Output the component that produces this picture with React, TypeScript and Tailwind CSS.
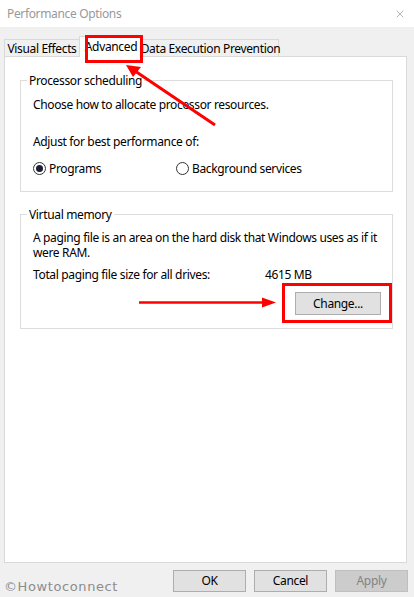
import { X } from "lucide-react";

const font = "font-['Noto_Sans',sans-serif] tracking-[-0.35px]";

function Radio({ checked, label }: { checked?: boolean; label: string }) {
  return (
    <div className="flex items-center gap-[3px]">
      <span className="w-[13px] h-[13px] rounded-full border border-[#333] bg-white flex items-center justify-center">
        {checked && <span className="w-[7px] h-[7px] rounded-full bg-[#1e1e32]" />}
      </span>
      <span>{label}</span>
    </div>
  );
}

function Group({ title, children, className }: { title: string; children: React.ReactNode; className?: string }) {
  return (
    <div className={`ml-[15px] w-[373px] border border-[#dcdcdc] pl-[12px] ${className ?? ""}`}>
      <div className="-mt-[8px] ml-[-6px] w-fit bg-white px-[2px] leading-[16px]">{title}</div>
      {children}
    </div>
  );
}

function Btn({ label, disabled, className }: { label: string; disabled?: boolean; className?: string }) {
  return (
    <div
      className={`h-[22px] flex items-center justify-center border ${
        disabled ? "bg-[#cccccc] border-[#bfbfbf] text-[#838383]" : "bg-[#e1e1e1] border-[#adadad] text-black"
      } ${className ?? ""}`}
    >
      {label}
    </div>
  );
}

export default function App() {
  return (
    <div className={`relative w-[414px] h-[597px] overflow-hidden bg-[#f0f0f0] text-[12px] text-black ${font}`}>
      {/* title bar */}
      <div className="h-[27px] bg-white flex items-center justify-between pl-[7px] pr-[8px]">
        <span className="text-[#999]">Performance Options</span>
        <X size={12} strokeWidth={1} className="text-[#666]" />
      </div>

      {/* tabs */}
      <div className="mt-[9px] ml-[4px] flex items-end h-[21px] whitespace-nowrap">
        <div className="w-[76px] h-[18px] border border-b-0 border-[#d9d9d9] flex items-center justify-center leading-none">
          Visual Effects
        </div>
        <div className="relative z-10 w-[64px] h-[21px] bg-white border border-b-0 border-[#d9d9d9] -ml-[1px] flex items-start justify-center pt-[2px] leading-[15px]">
          Advanced
        </div>
        <div className="w-[137px] h-[18px] border border-b-0 border-[#d9d9d9] -ml-[1px] flex items-center justify-center leading-none">
          Data Execution Prevention
        </div>
      </div>

      {/* panel */}
      <div className="-mt-[1px] ml-[4px] w-[403px] h-[507px] bg-white border border-[#d9d9d9] pt-[23px] leading-[15px]">
        <Group title="Processor scheduling" className="pb-[15px]">
          <div className="mt-[8px]">Choose how to allocate processor resources.</div>
          <div className="mt-[22px]">Adjust for best performance of:</div>
          <div className="mt-[12px] grid grid-cols-[143px_1fr]">
            <Radio checked label="Programs" />
            <Radio label="Background services" />
          </div>
        </Group>

        <Group title="Virtual memory" className="mt-[22px] pb-[13px]">
          <p className="mt-[7px] w-[352px]">
            A paging file is an area on the hard disk that Windows uses as if it were RAM.
          </p>
          <div className="mt-[7px] grid grid-cols-[232px_1fr]">
            <span>Total paging file size for all drives:</span>
            <span>4615 MB</span>
          </div>
          <div className="mt-[10px] flex justify-end pr-[11px]">
            <Btn label="Change..." className="w-[86px] h-[23px]" />
          </div>
        </Group>
      </div>

      {/* bottom row */}
      <div className="mt-[7px] flex justify-between pl-[4px] pr-[6px]">
        <span className="mt-[9px] text-[13px] leading-[16px] tracking-[0.6px] text-[#8c8c8c] font-['DejaVu_Sans',sans-serif]">
          ©Howtoconnect
        </span>
        <div className="flex gap-[8px]">
          <Btn label="OK" className="w-[73px]" />
          <Btn label="Cancel" className="w-[73px]" />
          <Btn label="Apply" disabled className="w-[73px]" />
        </div>
      </div>

      {/* annotations */}
      <div className="absolute z-20 left-[85px] top-[35px] w-[58px] h-[28px] border-[3px] border-[#f00]" />
      <div className="absolute z-20 left-[282px] top-[283px] w-[110px] h-[40px] border-[3px] border-[#f00]" />
      <svg className="absolute z-20 inset-0 pointer-events-none" width="414" height="597">
        <line x1="215" y1="125" x2="135" y2="71" stroke="#f00" strokeWidth="3" />
        <polygon points="126,65 141,67 133,77" fill="#f00" />
        <line x1="139" y1="302.5" x2="264" y2="302.5" stroke="#f00" strokeWidth="2.5" />
        <polygon points="276,302.5 262,297.5 262,307.5" fill="#f00" />
      </svg>
    </div>
  );
}
